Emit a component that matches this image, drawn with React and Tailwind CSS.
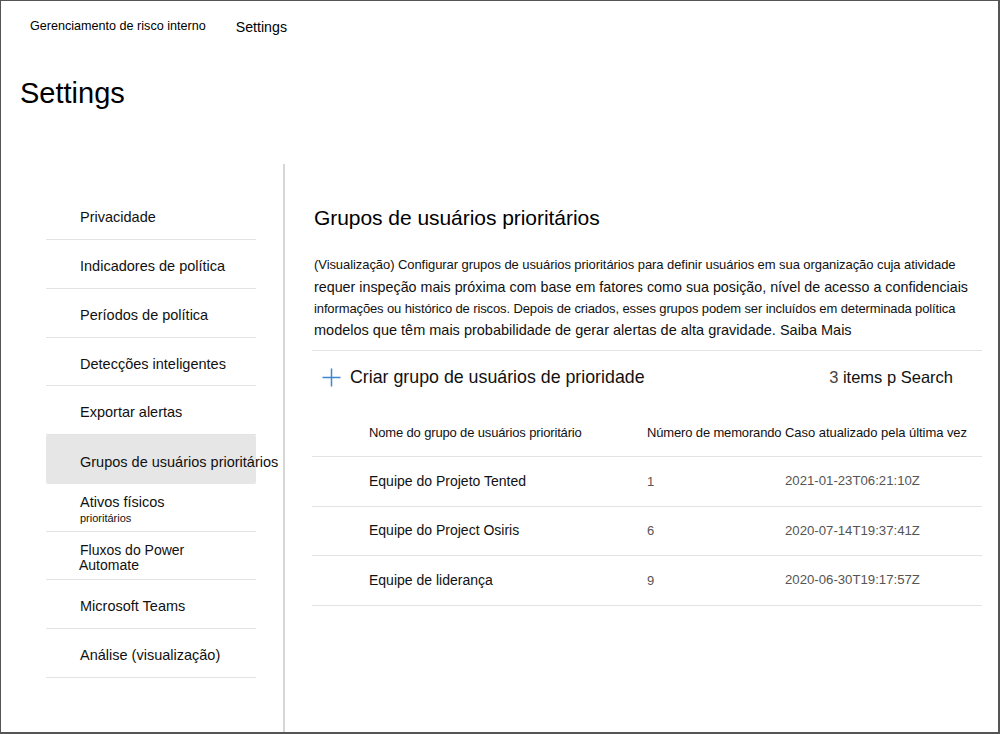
import React from "react"

const font = { fontFamily: '"Liberation Sans", Arial, sans-serif' }

const navItems = [
  { label: "Privacidade", h: "h-[49px]" },
  { label: "Indicadores de política", h: "h-[49px]" },
  { label: "Períodos de política", h: "h-[49px]" },
  { label: "Detecções inteligentes", h: "h-[48px]" },
  { label: "Exportar alertas", h: "h-[49px]" },
  { label: "Grupos de usuários prioritários", active: true, h: "h-[49px]" },
  { label: "Ativos físicos", sub: "prioritários", h: "h-[48px]" },
  { label: "Fluxos do Power", second: "Automate", h: "h-[48px]" },
  { label: "Microsoft Teams", h: "h-[49px]" },
  { label: "Análise (visualização)", h: "h-[49px]" },
]

const rows = [
  { name: "Equipe do Projeto Tented", count: "1", updated: "2021-01-23T06:21:10Z" },
  { name: "Equipe do Project Osiris", count: "6", updated: "2020-07-14T19:37:41Z" },
  { name: "Equipe de liderança", count: "9", updated: "2020-06-30T19:17:57Z" },
]

const PlusIcon = () => (
  <svg width="19" height="19" viewBox="0 0 19 19" aria-hidden="true">
    <path d="M9.5 0.5v18M0.5 9.5h18" stroke="#3f87d4" strokeWidth="1.5" fill="none" />
  </svg>
)

const NavItem = ({ item }) => {
  if (item.sub) {
    return (
      <div className={`${item.h} border-b border-[#e3e3e3] flex flex-col justify-center pl-[34px] pt-[4px]`}>
        <span className="text-[14.5px] leading-[17px] text-[#111]">{item.label}</span>
        <span className="text-[11px] leading-[14px] text-[#111]">{item.sub}</span>
      </div>
    )
  }
  if (item.second) {
    return (
      <div className={`${item.h} border-b border-[#e3e3e3] flex flex-col justify-center pl-[34px] pt-[5px]`}>
        <span className="text-[14px] leading-[15px] text-[#111]">{item.label}</span>
        <span className="text-[14px] leading-[15px] text-[#111] -ml-px">{item.second}</span>
      </div>
    )
  }
  return (
    <div
      className={`${item.h} flex items-center pl-[34px] pt-[6px] whitespace-nowrap ${
        item.active ? "bg-[#e6e6e6] rounded-[2px]" : "border-b border-[#e3e3e3]"
      }`}
    >
      <span className="text-[14.5px] text-[#111]">{item.label}</span>
    </div>
  )
}

export default function App() {
  return (
    <div
      style={font}
      className="w-[1000px] h-[734px] bg-white border-l border-t border-r-2 border-b-2 border-[#555] flex flex-col overflow-hidden text-black"
    >
      {/* breadcrumb */}
      <div className="flex items-end pl-[29px] pt-[13px] h-[33px]">
        <span className="text-[12.6px] leading-[16px]">Gerenciamento de risco interno</span>
        <span className="text-[14.2px] leading-[17px] ml-[30px] mb-[-2px]">Settings</span>
      </div>
      <h1 className="text-[29px] leading-[34px] pl-[19px] mt-[42px]">Settings</h1>

      <div className="flex flex-1 mt-[54px]">
        {/* left nav */}
        <div className="w-[282px] pl-[45px] pt-[27px] shrink-0">
          <div className="w-[210px]">
            {navItems.map((item) => (
              <NavItem key={item.label} item={item} />
            ))}
          </div>
        </div>
        <div className="w-[2px] bg-[#d6d6d6]" />

        {/* main */}
        <div className="pl-[28px] pt-[42px] w-[697px]">
          <h2 className="text-[21px] leading-[24px] pl-[1px] tracking-[-0.05px]">Grupos de usuários prioritários</h2>
          <div className="mt-[24px] pl-[1px] text-[#111] whitespace-nowrap">
            <div className="text-[13px] leading-[22px] tracking-[-0.07px]">
              (Visualização) Configurar grupos de usuários prioritários para definir usuários em sua organização cuja atividade
            </div>
            <div className="text-[14.3px] leading-[22px]">
              requer inspeção mais próxima com base em fatores como sua posição, nível de acesso a confidenciais
            </div>
            <div className="text-[13px] leading-[22px] tracking-[-0.12px]">
              informações ou histórico de riscos. Depois de criados, esses grupos podem ser incluídos em determinada política
            </div>
            <div className="text-[14.5px] leading-[21px]">
              modelos que têm mais probabilidade de gerar alertas de alta gravidade. Saiba Mais
            </div>
          </div>
          <div className="w-[670px] mt-[9px] -ml-[1px] border-t border-[#e3e3e3]" />

          {/* command bar */}
          <div className="w-[670px] h-[52px] -ml-[1px] flex items-center pl-[10px] pr-[29px]">
            <PlusIcon />
            <span className="ml-[9px] text-[17.8px] text-[#111]">Criar grupo de usuários de prioridade</span>
            <span className="ml-auto text-[16.5px] text-[#111]">
              <span className="text-[#444]">3</span> items p Search
            </span>
          </div>

          {/* table */}
          <div className="w-[670px] -ml-[1px]">
            <div className="h-[54px] flex items-end pb-[14px] border-b border-[#e3e3e3] text-[13px] text-[#111] tracking-[-0.15px] whitespace-nowrap">
              <span className="w-[335px] pl-[57px]">Nome do grupo de usuários prioritário</span>
              <span className="w-[138px]">Número de memorando</span>
              <span className="tracking-[-0.05px]">Caso atualizado pela última vez</span>
            </div>
            {rows.map((r) => (
              <div
                key={r.name}
                className="h-[49.5px] flex items-center border-b border-[#e3e3e3] whitespace-nowrap"
              >
                <span className="w-[335px] pl-[57px] text-[14px] text-[#111]">{r.name}</span>
                <span className="w-[138px] text-[13px] text-[#555]">{r.count}</span>
                <span className="text-[13.2px] text-[#555]">{r.updated}</span>
              </div>
            ))}
          </div>
        </div>
      </div>
    </div>
  )
}
